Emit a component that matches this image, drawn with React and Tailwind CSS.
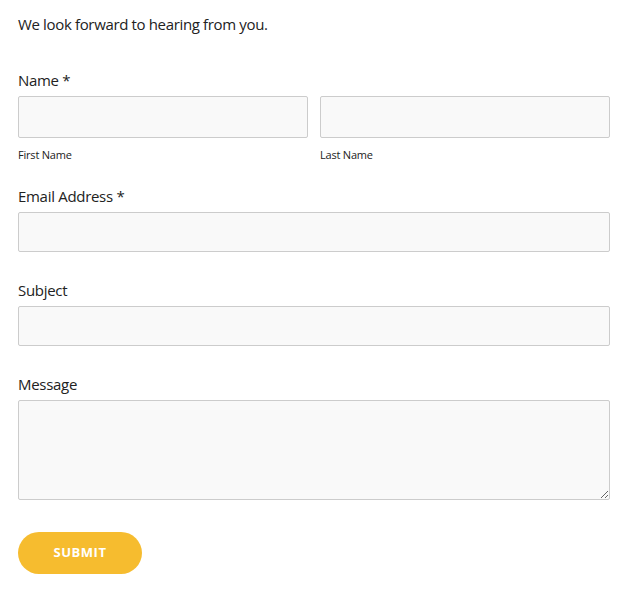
export default function App() {
  const font = { fontFamily: '"Open Sans", "Liberation Sans", sans-serif' };
  return (
    <div className="bg-white w-[634px] h-[596px] pl-[18px] pr-[24px] text-[#222]" style={font}>
      <p className="pt-[13px] text-[15px] leading-[22px] tracking-[-0.35px]">We look forward to hearing from you.</p>

      <div className="mt-[34px]">
        <label className="block text-[15px] leading-[22px] tracking-[-0.3px]">Name *</label>
        <div className="mt-[5px] flex gap-[12px]">
          <div className="flex-1">
            <input className="block w-full h-[42px] bg-[#f9f9f9] border border-[#cccccc] rounded-[2px]" />
            <div className="mt-[9px] text-[11px] leading-[16px] tracking-[-0.2px]">First Name</div>
          </div>
          <div className="flex-1">
            <input className="block w-full h-[42px] bg-[#f9f9f9] border border-[#cccccc] rounded-[2px]" />
            <div className="mt-[9px] text-[11px] leading-[16px] tracking-[-0.2px]">Last Name</div>
          </div>
        </div>
      </div>

      <div className="mt-[22px]">
        <label className="block text-[15px] leading-[22px] tracking-[-0.3px]">Email Address *</label>
        <input className="mt-[5px] block w-full h-[40px] bg-[#f9f9f9] border border-[#cccccc] rounded-[2px]" />
      </div>

      <div className="mt-[27px]">
        <label className="block text-[15px] leading-[22px] tracking-[-0.3px]">Subject</label>
        <input className="mt-[5px] block w-full h-[40px] bg-[#f9f9f9] border border-[#cccccc] rounded-[2px]" />
      </div>

      <div className="mt-[27px]">
        <label className="block text-[15px] leading-[22px] tracking-[-0.3px]">Message</label>
        <textarea className="mt-[5px] block w-full h-[100px] bg-[#f9f9f9] border border-[#cccccc] rounded-[2px]" />
      </div>

      <button className="mt-[32px] w-[124px] h-[42px] rounded-full bg-[#f6bc2f] text-white text-[13px] font-bold tracking-[0.5px]">SUBMIT</button>
    </div>
  );
}
